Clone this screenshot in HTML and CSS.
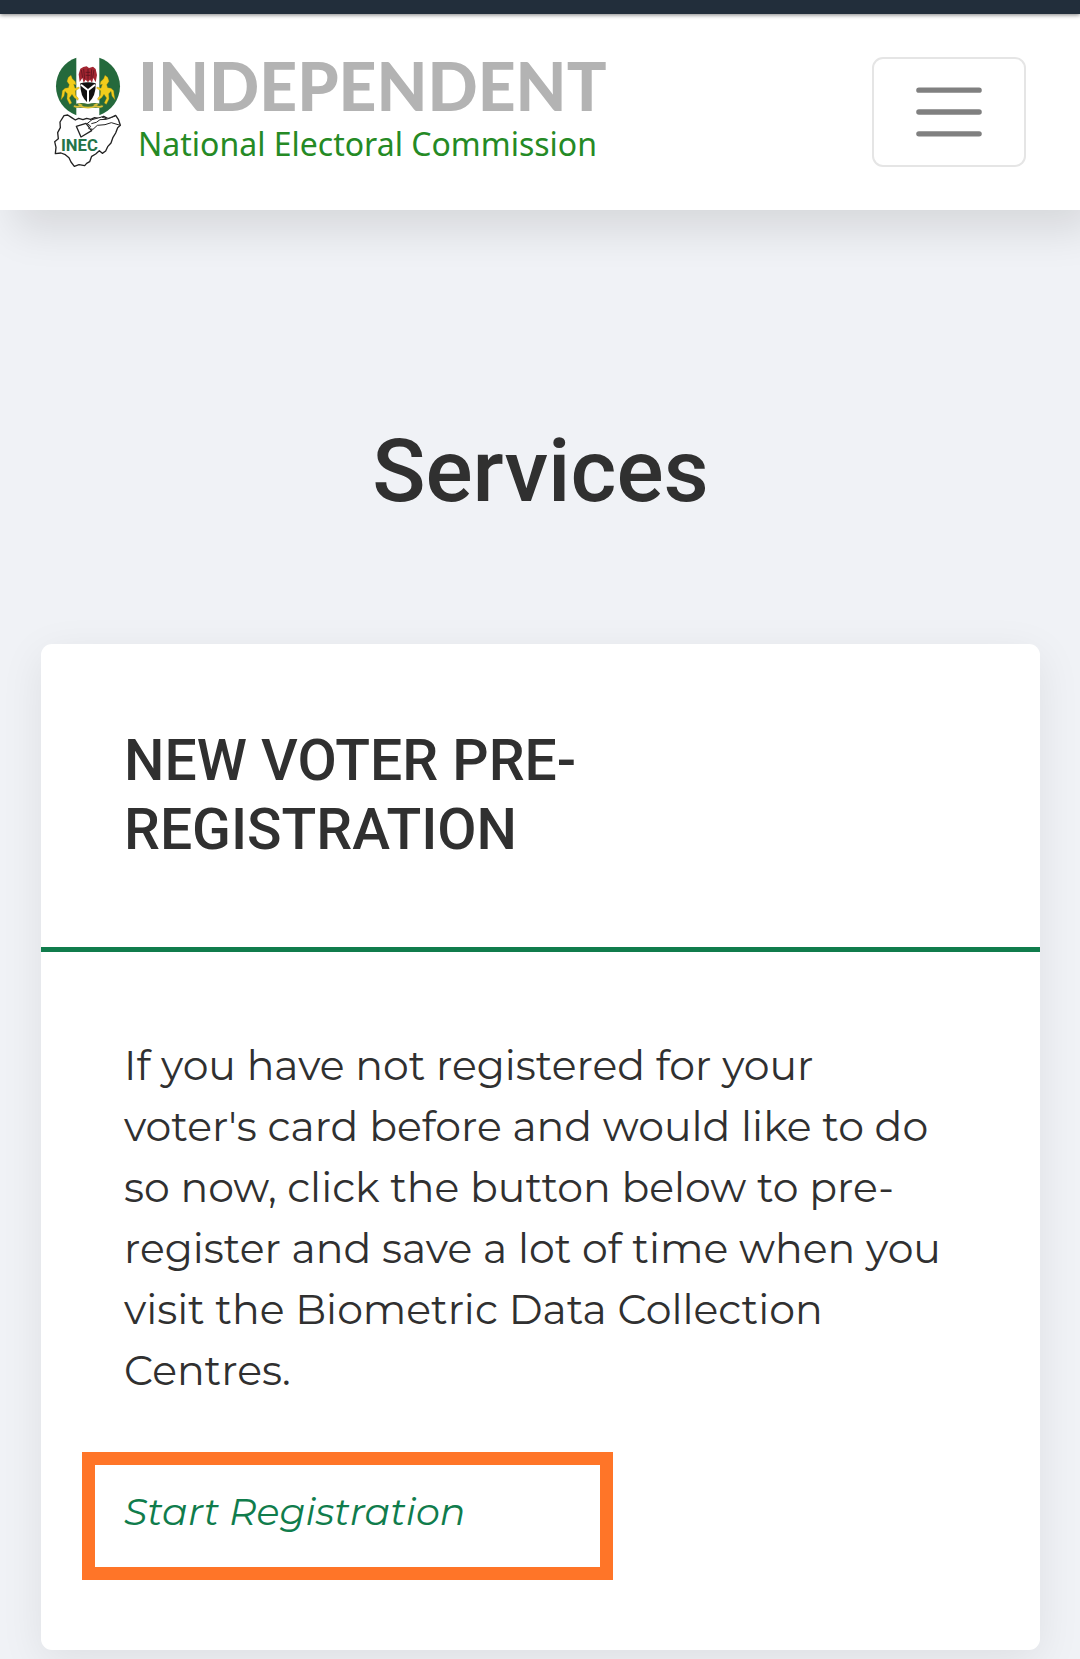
FILE: index.html
```html
<!DOCTYPE html>
<html lang="en">
<head>
  <meta charset="UTF-8">
  <meta name="viewport" content="width=device-width, initial-scale=1">
  <title>INEC - Services</title>
  <link rel="stylesheet" href="styles.css">
</head>
<body>
  <div class="topbar"></div>

  <header class="navbar">
    <a class="brand" href="#">
      <svg class="brand-logo" viewBox="45 33 204 336" aria-hidden="true">
        <!-- flag disc -->
        <path fill="#24693c" d="M112 38 C76 50 51 84 51 124 C51 164 76 198 112 211 Z"/>
        <path fill="#24693c" d="M181 38 C217 50 243 84 243 124 C243 164 217 198 181 211 Z"/>
        <!-- eagle -->
        <path fill="#a32531" d="M133 66 L143 64 L150 69 L162 65 L170 72 L174 90 L170 112 L163 99 L159 113 L153 104 L147 112 L140 104 L134 113 L130 99 L122 111 L119 88 L124 71 Z"/>
        <path fill="none" stroke="#4d1118" stroke-width="2" d="M127 75 L131 98 M134 72 L137 102 M165 75 L161 98 M158 73 L156 102 M140 82 H154 M140 91 H154 M147 72 V104"/>
        <!-- horses -->
        <path id="horse" fill="#f2cd1b" stroke="#a98a12" stroke-width="1" d="M88 97 L96 91 L100 101 L109 110 L111 119 L104 118 L108 130 L120 126 L121 130 L109 137 L110 151 L118 160 L117 166 L106 158 L99 148 L91 159 L98 174 L92 178 L84 162 L85 146 L78 139 L75 153 L66 164 L69 147 L70 137 L78 130 L88 128 L91 119 L84 109 Z"/>
        <use href="#horse" transform="matrix(-1 0 0 1 294 0)"/>
        <!-- shield -->
        <path fill="#111" d="M124 115 Q147 108 170 115 Q172 154 147 175 Q122 154 124 115 Z"/>
        <path fill="none" stroke="#fff" stroke-width="6" d="M126 119 L147 136 L168 119 M147 134 V174"/>
        <path fill="#3c7135" d="M100 181 Q123 169 147 177 Q172 169 195 181 L192 188 H102 Z"/>
        <path fill="none" stroke="#dcc13a" stroke-width="5" d="M105 183 Q115 188 123 183 Q147 193 171 183 Q181 188 191 183"/>
        <path fill="none" stroke="#dcc13a" stroke-width="4" d="M118 177 L130 181 M176 177 L164 181"/>
        <!-- map outline -->
        <path fill="#fff" stroke="#222" stroke-width="4" stroke-linejoin="round" d="M75 212 L86 210 L98 218 L109 225 L119 220 L132 224 L143 220 L155 223 L167 218 L181 221 L194 214 L207 221 L219 216 L230 211 L238 223 L244 241 L236 248 L230 264 L222 277 L216 294 L206 305 L200 318 L190 325 L181 317 L170 327 L158 334 L152 350 L143 355 L137 362 L120 359 L106 364 L96 351 L90 338 L79 329 L66 324 L49 326 L51 307 L47 290 L58 281 L56 263 L64 248 L63 231 Z"/>
        <!-- hand and ballot -->
        <path fill="#fff" stroke="#222" stroke-width="4" stroke-linejoin="round" d="M112 244 L141 235 L158 257 L126 276 Z"/>
        <path fill="#fff" stroke="#222" stroke-width="3" stroke-linejoin="round" d="M143 237 L159 224 L188 216 L204 222 L229 213 M145 235 L155 244 L149 251 L162 253 L175 241 L198 239 L217 233 L244 241 M157 236 L172 232 L183 224 L203 223"/>
        <text class="brand-inec" x="66" y="317">INEC</text>
      </svg>
      <span class="brand-name">
        <span class="brand-title">INDEPENDENT</span>
        <span class="brand-subtitle">National Electoral Commission</span>
      </span>
    </a>
    <button class="navbar-toggler" type="button" aria-label="Toggle navigation">
      <svg class="toggler-icon" viewBox="0 0 30 30" aria-hidden="true">
        <path stroke="#808080" stroke-width="2" stroke-linecap="round" d="M4 7h22M4 15h22M4 23h22"/>
      </svg>
    </button>
  </header>

  <main class="services">
    <h1>Services</h1>

    <section class="card">
      <h2 class="card-header">NEW VOTER PRE-<br>REGISTRATION</h2>
      <div class="card-body">
        <p>
          If you have not registered for your<br>
          voter's card before and would like to do<br>
          so now, click the button below to pre-<br>
          register and save a lot of time when you<br>
          visit the Biometric Data Collection<br>
          Centres.
        </p>
        <a class="card-link" href="#">Start Registration</a>
      </div>
    </section>
  </main>
</body>
</html>
```
FILE: styles.css
```css
* { box-sizing: border-box; }
body { margin: 0; background: #f0f2f6; color: #303030; font-family: Montserrat, Inter, sans-serif; }

.topbar { position: relative; z-index: 2; height: 14px; background: #222e3b; box-shadow: 0 1px 4px rgba(0, 0, 0, 0.5); }

.navbar { position: relative; display: flex; align-items: center; justify-content: space-between; height: 196px; padding: 0 54px; background: #fff; box-shadow: 14px 20px 40px rgba(0, 0, 0, 0.11); }
.brand { display: flex; align-items: center; gap: 16px; text-decoration: none; }
.brand-logo { width: 68px; height: 112px; }
.brand-inec { font: bold 50px Roboto, sans-serif; fill: #24744a; }
.brand-name { display: flex; flex-direction: column; gap: 2px; padding-bottom: 2px; }
.brand-title { font: 900 66px/64px Lato, sans-serif; color: #b3b3b3; }
.brand-subtitle { font: 32px/48px "Noto Sans", sans-serif; color: #258a25; }
.navbar-toggler { display: flex; align-items: center; justify-content: center; width: 154px; height: 110px; padding: 0; border: 2px solid #e5e5e5; border-radius: 11px; background: none; }
.toggler-icon { width: 82px; height: 82px; fill: none; }

.services { padding: 0 40px 9px 41px; }
h1 { margin: 0; padding: 208px 0 120px; font: 500 88px/106px Roboto, sans-serif; text-align: center; }

.card { border-radius: 11px; background: #fff; box-shadow: 0 11px 44px rgba(0, 0, 0, 0.08); }
.card-header { margin: 0; padding: 82px 83px 83px; border-bottom: 5px solid #107c4c; font: 500 57px/69px Roboto, sans-serif; }
.card-body { padding: 83px 83px 70px; }
.card-body p { margin: 0 0 51px; font-size: 41px; line-height: 61px; }
.card-link { display: block; width: 531px; max-width: 100%; margin-left: -42px; padding: 16px 29px 25px; border: 13px solid #ff7528; color: #107c4c; font-size: 38px; font-style: italic; line-height: 61px; text-decoration: none; }
```
